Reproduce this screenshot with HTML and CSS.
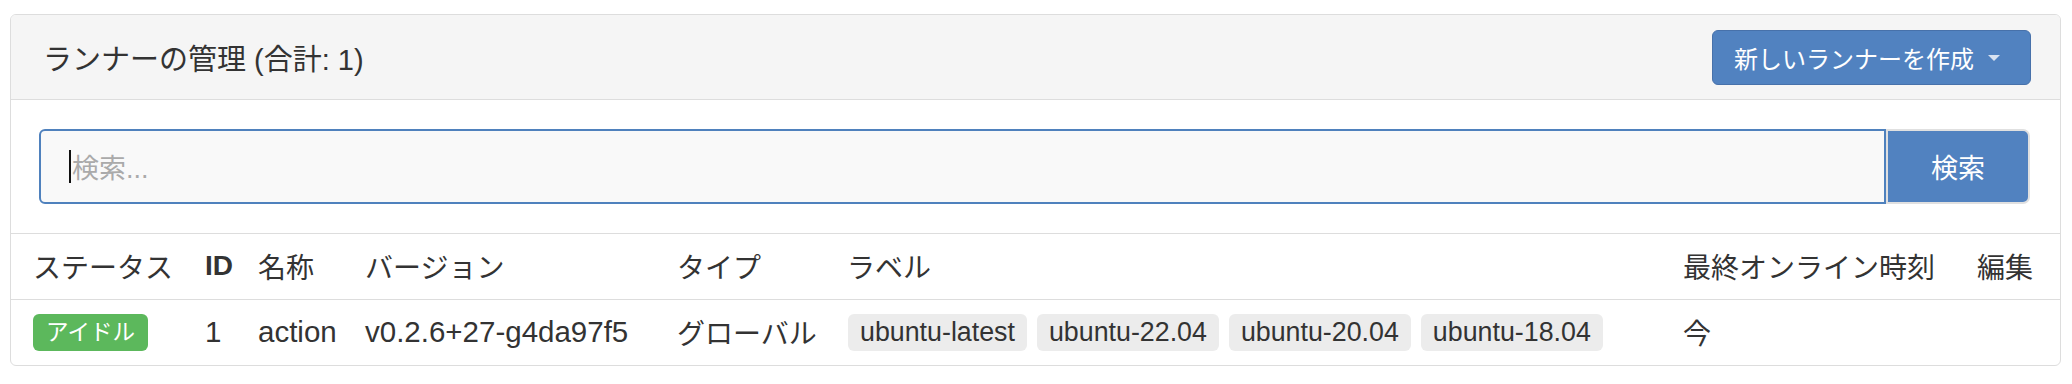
FILE: index.html
```html
<!DOCTYPE html>
<html lang="ja">
<head>
<meta charset="utf-8">
<title>ランナーの管理</title>
<link rel="stylesheet" href="styles.css">
</head>
<body>
<div class="page">
  <section class="panel">
    <header class="panel-head">
      <h3 class="panel-title">ランナーの管理 (合計: 1)</h3>
      <button class="btn-primary dropdown">
        <span>新しいランナーを作成</span>
        <span class="caret"></span>
      </button>
    </header>
    <div class="search-bar">
      <div class="search-input"><span class="cursor"></span><span class="placeholder">検索...</span></div>
      <button class="search-btn">検索</button>
    </div>
    <table class="runners">
      <colgroup>
        <col class="c1"><col class="c2"><col class="c3"><col class="c4"><col class="c5"><col class="c6"><col class="c7"><col class="c8">
      </colgroup>
      <thead>
        <tr>
          <th class="first">ステータス</th>
          <th class="latin">ID</th>
          <th>名称</th>
          <th>バージョン</th>
          <th>タイプ</th>
          <th>ラベル</th>
          <th>最終オンライン時刻</th>
          <th>編集</th>
        </tr>
      </thead>
      <tbody>
        <tr>
          <td class="first"><span class="status">アイドル</span></td>
          <td class="num">1</td>
          <td class="num">action</td>
          <td class="num">v0.2.6+27-g4da97f5</td>
          <td>グローバル</td>
          <td>
            <div class="labels">
              <span class="label">ubuntu-latest</span>
              <span class="label">ubuntu-22.04</span>
              <span class="label">ubuntu-20.04</span>
              <span class="label">ubuntu-18.04</span>
            </div>
          </td>
          <td>今</td>
          <td></td>
        </tr>
      </tbody>
    </table>
  </section>
</div>
</body>
</html>
```
FILE: styles.css
```css
* { box-sizing: border-box; }
html, body { margin: 0; padding: 0; background: #fff; }
body {
  font-family: "Liberation Sans", "Noto Sans CJK JP", sans-serif;
  color: #333;
  font-size: 28px;
}
.page { padding: 14px 11px 0 10px; }
.panel {
  border: 1px solid #dddddd;
  border-radius: 6px;
  overflow: hidden;
}
.panel-head {
  display: flex;
  align-items: center;
  justify-content: space-between;
  height: 85px;
  padding: 0 29px 0 32px;
  background: #f5f5f5;
  border-bottom: 1px solid #dddddd;
}
.panel-title {
  margin: 0;
  font-size: 29px;
  font-weight: normal;
  color: #333;
}
.btn-primary {
  display: inline-flex;
  align-items: center;
  gap: 14px;
  height: 55px;
  padding: 0 30px 0 21px;
  background: #5182c0;
  border: 1px solid #4771aa;
  border-radius: 6px;
  color: #fff;
  font-family: inherit;
  font-size: 24px;
}
.caret {
  width: 0;
  height: 0;
  border-left: 6px solid transparent;
  border-right: 6px solid transparent;
  border-top: 6px solid #d9e3f1;
  margin-top: 2px;
}
.search-bar {
  display: flex;
  padding: 29px 30px 29px 28px;
  border-bottom: 1px solid #dddddd;
}
.search-input {
  flex: 1;
  height: 75px;
  display: flex;
  align-items: center;
  padding-left: 28px;
  background: #f9f9f9;
  border: 2px solid #4f81bd;
  border-radius: 6px 0 0 6px;
}
.cursor {
  width: 2px;
  height: 33px;
  background: #111;
  margin-right: 1px;
}
.placeholder {
  color: #aaa;
  font-size: 27px;
}
.search-btn {
  width: 144px;
  height: 75px;
  background: #5182c0;
  color: #fff;
  border: 2px solid #e0e0e0;
  border-radius: 0 7px 7px 0;
  font-family: inherit;
  font-size: 27px;
}
.runners {
  width: 100%;
  table-layout: fixed;
  border-collapse: collapse;
}
.c1 { width: 194px; }
.c2 { width: 53px; }
.c3 { width: 107px; }
.c4 { width: 312px; }
.c5 { width: 170px; }
.c6 { width: 836px; }
.c7 { width: 294px; }
.runners th, .runners td {
  padding: 0;
  text-align: left;
  white-space: nowrap;
  vertical-align: middle;
}
.runners th {
  height: 65px;
  font-weight: normal;
  border-bottom: 1px solid #dddddd;
}
.runners th.latin { font-weight: bold; }
.runners td { height: 66px; }
.runners td.num { font-size: 29.5px; }
.runners .first { padding-left: 22px; }
.status {
  display: inline-block;
  background: #5cb85c;
  color: #fff;
  font-size: 22.5px;
  line-height: 37px;
  padding: 0 13px;
  border-radius: 6px;
}
.labels {
  display: flex;
  gap: 10px;
  margin-left: 1px;
}
.label {
  display: inline-block;
  background: #ececec;
  color: #333;
  font-size: 26.8px;
  line-height: 37px;
  padding: 0 12px;
  border-radius: 6px;
}
```
